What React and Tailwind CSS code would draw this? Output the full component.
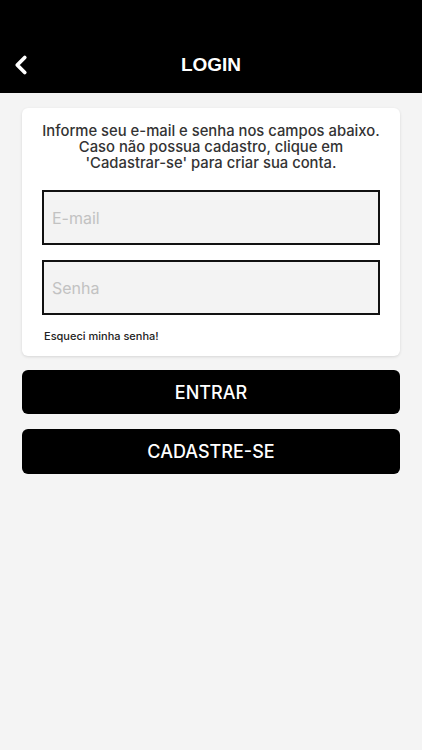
import { ChevronLeft } from 'lucide-react';

export default function App() {
  return (
    <div className="min-h-[750px] w-full bg-[#f4f4f4]" style={{ fontFamily: 'Inter, "Noto Sans", sans-serif' }}>
      <header className="relative h-[93px] bg-black">
        <div className="absolute left-[6px] top-[50px] text-white">
          <ChevronLeft className="h-[30px] w-[30px]" strokeWidth={3} />
        </div>
        <h1 className="pt-[53px] text-center text-[19px] font-bold leading-6 text-white" style={{ fontFamily: '"Liberation Sans", Arial, sans-serif' }}>
          LOGIN
        </h1>
      </header>

      <main className="px-[22px] pt-[15px]">
        <div className="rounded-md bg-white px-5 pb-3 pt-[15px] shadow-[0_1px_3px_rgba(0,0,0,0.12)]">
          <p className="-mx-4 whitespace-nowrap text-center text-[14.8px] font-medium leading-[16px] text-[#333]">
            Informe seu e-mail e senha nos campos abaixo.
            <br />
            Caso não possua cadastro, clique em
            <br />
            'Cadastrar-se' para criar sua conta.
          </p>
          <input
            placeholder="E-mail"
            className="mt-[19px] block h-[55px] w-full border-2 border-[#111] bg-[#f3f3f3] px-2 text-[16px] outline-none placeholder:text-[#c2c2c2]"
          />
          <input
            type="password"
            placeholder="Senha"
            className="mt-[15px] block h-[55px] w-full border-2 border-[#111] bg-[#f3f3f3] px-2 text-[16px] outline-none placeholder:text-[#c2c2c2]"
          />
          <p className="mt-[13px] pl-[2px] text-[11px] font-medium leading-4 text-[#222]">Esqueci minha senha!</p>
        </div>

        <button className="mt-[14px] flex h-[44px] w-full items-center justify-center rounded-md bg-black text-[18px] font-medium text-white">
          ENTRAR
        </button>
        <button className="mt-[15px] flex h-[45px] w-full items-center justify-center rounded-md bg-black text-[18px] font-medium text-white">
          CADASTRE-SE
        </button>
      </main>
    </div>
  );
}
